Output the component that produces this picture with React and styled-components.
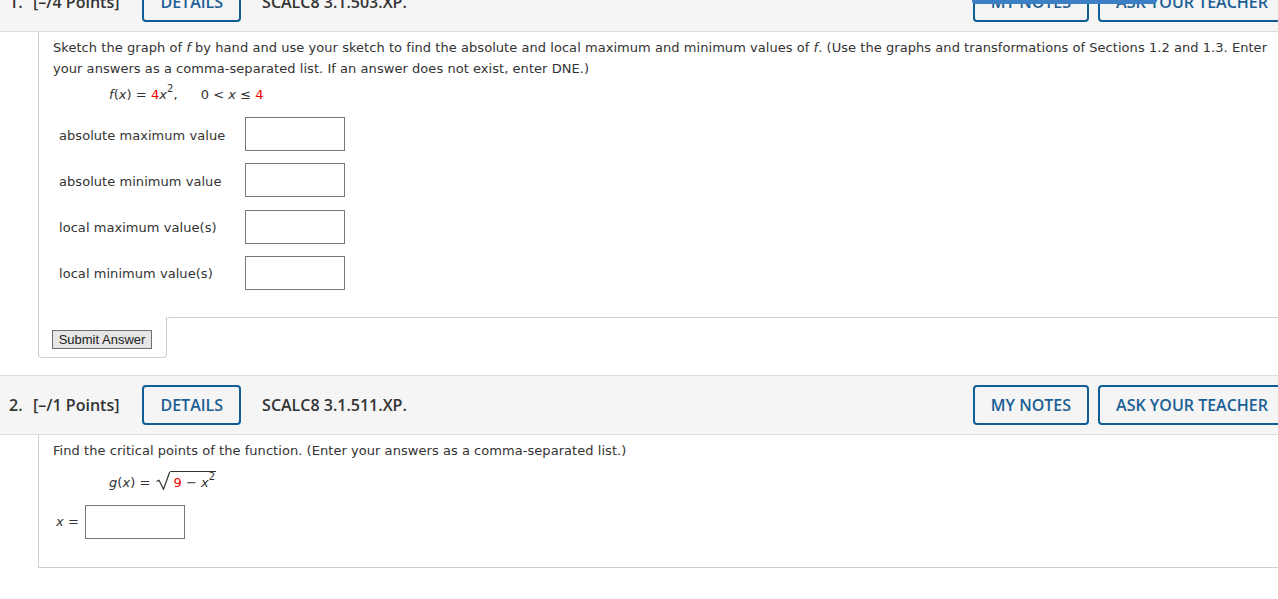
import React from "react";
import styled, { createGlobalStyle } from "styled-components";

const GlobalStyle = createGlobalStyle`
  html, body { margin: 0; padding: 0; background: #fff; overflow: hidden; }
  body { font-family: Verdana, "DejaVu Sans", sans-serif; color: #333; }
`;

const Page = styled.div`
  margin-top: -28px;
  width: 1286px;
`;

const Question = styled.section`
  margin-bottom: 17px;
`;

const Header = styled.div`
  display: flex;
  align-items: center;
  height: 58px;
  background: #f5f5f5;
  border-top: 1px solid #dcdcdc;
  border-bottom: 1px solid #dcdcdc;
  padding-left: 9px;
  font-family: "Open Sans", "Liberation Sans", sans-serif;
  font-size: 16px;
  color: #333;
`;

const Num = styled.span`
  font-weight: 600;
  width: 24px;
`;

const Points = styled.span`
  font-weight: 600;
  margin-right: 23px;
`;

const OutlineButton = styled.button`
  height: 40px;
  box-sizing: border-box;
  border: 2px solid #0f5f96;
  border-radius: 4px;
  background: transparent;
  color: #1c5f94;
  font-family: "Open Sans", "Liberation Sans", sans-serif;
  font-size: 16px;
  font-weight: 600;
  padding: 0 16px;
  margin-right: ${(p) => p.$gap || 0}px;
  white-space: nowrap;
`;

const Code = styled.span`
  font-weight: 600;
  margin-left: 21px;
`;

const Spacer = styled.div`
  flex: 1;
`;

const Body = styled.div`
  margin-left: 38px;
  border-left: 1px solid #cfcfcf;
  padding: 5px 0 ${(p) => p.$pb || 27}px 14px;
  font-size: 13px;
  line-height: 21px;
  letter-spacing: 0.05px;
  ${(p) => (p.$closed ? "border-bottom: 1px solid #cfcfcf;" : "")}
`;

const Para = styled.p`
  margin: 0;
`;

const MathLine = styled.div`
  margin: ${(p) => p.$mt || 5}px 0 0 56px;
  line-height: 21px;
`;

const I = styled.i`
  font-style: italic;
`;

const Red = styled.span`
  color: #e00;
`;

const Sup = styled.sup`
  font-size: 10px;
  line-height: 0;
  vertical-align: 7px;
`;

const Gap = styled.span`
  display: inline-block;
  width: ${(p) => p.$w}px;
`;

const Radical = styled.span`
  display: inline-block;
  margin-left: 6px;
`;

const RadicalSign = styled.svg`
  width: 14px;
  height: 18px;
  vertical-align: -3px;
`;

const RadicalBody = styled.span`
  display: inline-block;
  border-top: 1px solid #333;
  padding: 2px 1px 0 3px;
  line-height: 17px;
`;

const AnswerGrid = styled.div`
  display: grid;
  grid-template-columns: 186px 100px;
  row-gap: 12.3px;
  align-items: center;
  margin: 12px 0 0 6px;
`;

const Label = styled.span`
  padding-top: 2px;
`;

const Input = styled.input`
  box-sizing: border-box;
  width: 100px;
  height: 34px;
  border: 1px solid #777;
  margin: 0;
  background: #fff;
`;

const InlineRow = styled.div`
  display: flex;
  align-items: center;
  gap: 6px;
  margin: 12px 0 0 3px;
`;

const SubmitRow = styled.div`
  display: flex;
  margin-left: 38px;
`;

const SubmitTab = styled.div`
  box-sizing: border-box;
  width: 129px;
  height: 41px;
  border: 1px solid #cfcfcf;
  border-top: none;
  border-radius: 0 0 4px 4px;
  padding: 12px 0 0 13px;
`;

const Filler = styled.div`
  flex: 1;
  border-top: 1px solid #cfcfcf;
  border-top-left-radius: 3px;
`;

const SubmitButton = styled.button`
  box-sizing: border-box;
  height: 19px;
  width: 100px;
  padding: 0;
  background: #e6e6e6;
  border: 1px solid #6f6f6f;
  font-family: Arial, "Liberation Sans", sans-serif;
  font-size: 13px;
  color: #222;
  line-height: 16px;
`;

const TopBar = styled.div`
  position: fixed;
  top: 0;
  left: 972px;
  width: 184px;
  height: 4px;
  background: #3d7fc4;
  border-radius: 0 0 3px 3px;
`;

function QHeader({ n, pts, code }) {
  return (
    <Header>
      <Num>{n}.</Num>
      <Points>[–/{pts} Points]</Points>
      <OutlineButton>DETAILS</OutlineButton>
      <Code>{code}</Code>
      <Spacer />
      <OutlineButton $gap={9}>MY NOTES</OutlineButton>
      <OutlineButton>ASK YOUR TEACHER</OutlineButton>
    </Header>
  );
}

const rows = [
  "absolute maximum value",
  "absolute minimum value",
  "local maximum value(s)",
  "local minimum value(s)",
];

export default function App() {
  return (
    <>
      <GlobalStyle />
      <TopBar />
      <Page>
        <Question>
          <QHeader n={1} pts={4} code="SCALC8 3.1.503.XP." />
          <Body>
            <Para>
              Sketch the graph of <I>f</I> by hand and use your sketch to find the absolute and local maximum and minimum values of <I>f</I>. (Use the graphs and transformations of Sections 1.2 and 1.3. Enter your answers as a comma-separated list. If an answer does not exist, enter DNE.)
            </Para>
            <MathLine>
              <I>f</I>(<I>x</I>) = <Red>4</Red><I>x</I><Sup>2</Sup>,<Gap $w={23} />0 &lt; <I>x</I> ≤ <Red>4</Red>
            </MathLine>
            <AnswerGrid>
              {rows.map((r) => (
                <React.Fragment key={r}>
                  <Label>{r}</Label>
                  <Input />
                </React.Fragment>
              ))}
            </AnswerGrid>
          </Body>
          <SubmitRow>
            <SubmitTab>
              <SubmitButton>Submit Answer</SubmitButton>
            </SubmitTab>
            <Filler />
          </SubmitRow>
        </Question>
        <Question>
          <QHeader n={2} pts={1} code="SCALC8 3.1.511.XP." />
          <Body $closed $pb={28}>
            <Para>
              Find the critical points of the function. (Enter your answers as a comma-separated list.)
            </Para>
            <MathLine $mt={10}>
              <I>g</I>(<I>x</I>) =
              <Radical>
                <RadicalSign viewBox="0 0 14 18">
                  <path d="M0.5 9.5 L3 8.2 L7.5 17.3 L13.5 0.5 L14 0.5" fill="none" stroke="#333" strokeWidth="1.2" />
                </RadicalSign>
                <RadicalBody>
                  <Red>9</Red> − <I>x</I><Sup>2</Sup>
                </RadicalBody>
              </Radical>
            </MathLine>
            <InlineRow>
              <span>
                <I>x</I> =
              </span>
              <Input />
            </InlineRow>
          </Body>
        </Question>
      </Page>
    </>
  );
}
